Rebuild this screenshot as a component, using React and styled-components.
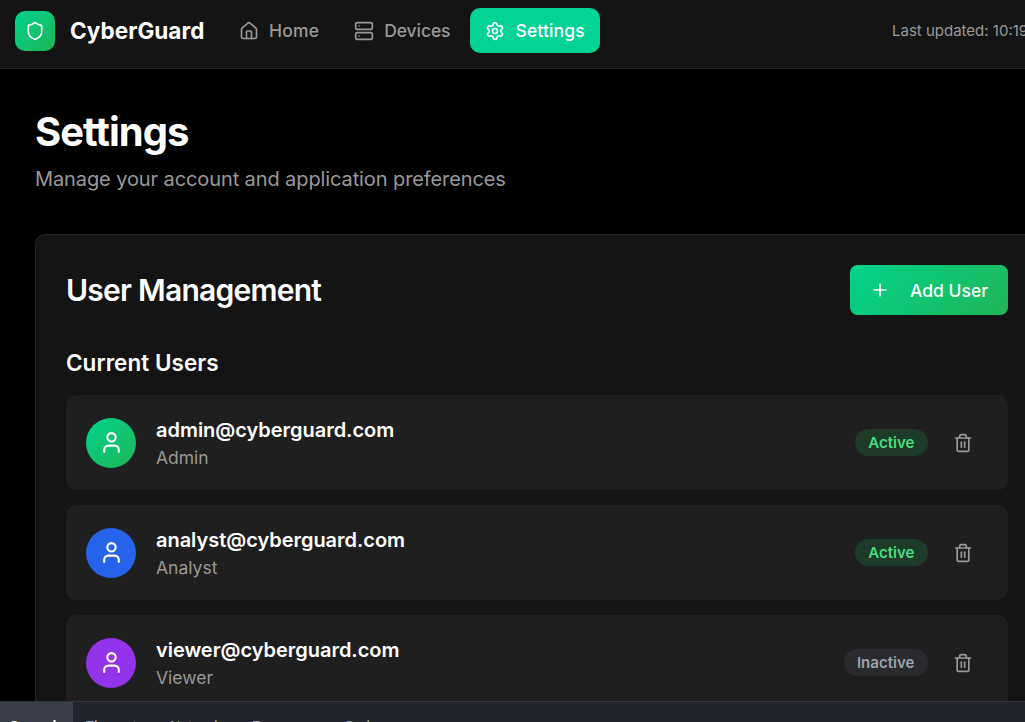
import React from 'react';
import styled, { createGlobalStyle } from 'styled-components';
import { Shield, House, Server, Settings, Plus, User, Trash2 } from 'lucide-react';

const Global = createGlobalStyle`
  *, *::before, *::after { box-sizing: border-box; }
  html, body { margin: 0; background: #000; }
  body { height: 722px; overflow: hidden; font-family: Inter, "Liberation Sans", sans-serif; color: #fff; }
  button { font-family: inherit; border: 0; background: none; margin: 0; padding: 0; }
  h1, h2, h3, p { margin: 0; }
`;

const Window = styled.div`
  width: 1025px;
  height: 722px;
  overflow: hidden;
  display: flex;
  flex-direction: column;
`;

const Page = styled.div`
  flex: 1;
  min-height: 0;
  overflow: hidden;
`;

const Header = styled.header`
  display: flex;
  align-items: center;
  height: 69px;
  padding: 0 0 7px 15px;
  background: #141414;
  border-bottom: 1px solid #262626;
`;

const LogoMark = styled.div`
  display: flex;
  align-items: center;
  justify-content: center;
  width: 40px;
  height: 40px;
  margin-right: 15px;
  border-radius: 10px;
  background: linear-gradient(135deg, #00d38b, #20b557);
`;

const LogoName = styled.span`
  width: 134px;
  font-size: 22.5px;
  line-height: 35px;
  font-weight: 700;
  letter-spacing: 0.05px;
  white-space: nowrap;
`;

const Nav = styled.nav`
  display: flex;
  gap: 5px;
  margin-left: 20px;
`;

const NavLink = styled.button`
  display: flex;
  align-items: center;
  gap: 10px;
  height: 45px;
  padding: 0 15px;
  border-radius: 10px;
  font-size: 17.5px;
  font-weight: 500;
  letter-spacing: ${(p) => p.$tracking || 0}px;
  white-space: nowrap;
  color: ${(p) => (p.$active ? '#fff' : '#999')};
  background: ${(p) => (p.$active ? '#00d395' : 'transparent')};
`;

const Updated = styled.span`
  width: 133px;
  margin-left: auto;
  overflow: hidden;
  white-space: nowrap;
  font-size: 15px;
  line-height: 20px;
  color: #999;
`;

const Main = styled.main`
  padding: 40px 0 0 35px;
`;

const Title = styled.h1`
  font-size: 40px;
  line-height: 45px;
  font-weight: 700;
  letter-spacing: -0.025em;
`;

const Subtitle = styled.p`
  margin-top: 10px;
  font-size: 20px;
  line-height: 30px;
  letter-spacing: -0.1px;
  color: #999;
`;

const Panel = styled.section`
  width: 1004px;
  height: 600px;
  margin-top: 40px;
  padding: 30px;
  border: 1px solid #262626;
  border-radius: 10px;
  background: #141414;
`;

const PanelHead = styled.div`
  display: flex;
  align-items: center;
  justify-content: space-between;
  height: 50px;
`;

const PanelTitle = styled.h2`
  font-size: 30px;
  line-height: 40px;
  font-weight: 600;
  letter-spacing: -0.025em;
`;

const AddButton = styled.button`
  display: flex;
  align-items: center;
  gap: 20px;
  width: 158px;
  height: 50px;
  padding: 0 20px;
  border-radius: 7.5px;
  color: #fff;
  font-size: 17.5px;
  font-weight: 500;
  white-space: nowrap;
  background: linear-gradient(135deg, #00d38b, #20b557);
`;

const SectionTitle = styled.h3`
  margin: 30px 0 15px;
  font-size: 22.5px;
  line-height: 35px;
  font-weight: 600;
  letter-spacing: 0.04px;
`;

const UserList = styled.div`
  display: flex;
  flex-direction: column;
  gap: 15px;
`;

const UserRow = styled.div`
  display: flex;
  align-items: center;
  height: 95px;
  padding: 0 20px;
  border-radius: 10px;
  background: #1f1f1f;
`;

const Avatar = styled.div`
  display: flex;
  align-items: center;
  justify-content: center;
  width: 50px;
  height: 50px;
  border-radius: 50%;
  background: ${(p) => p.$fill};
`;

const Identity = styled.div`
  flex: 1;
  margin-left: 20px;
`;

const Email = styled.p`
  font-size: 20px;
  line-height: 30px;
  font-weight: 600;
  letter-spacing: -0.03px;
`;

const Role = styled.p`
  font-size: 17.5px;
  line-height: 25px;
  color: #999;
`;

const Badge = styled.span`
  display: flex;
  align-items: center;
  height: 27px;
  padding: 0 13.5px 0 13px;
  border-radius: 14px;
  font-size: 15px;
  font-weight: 600;
  letter-spacing: 0.04px;
  color: ${(p) => (p.$active ? '#4ade80' : '#9ca3af')};
  background: ${(p) => (p.$active ? '#1e3a29' : '#2a2b2f')};
`;

const DeleteButton = styled.button`
  display: flex;
  align-items: center;
  justify-content: center;
  width: 40px;
  height: 40px;
  margin: 0 5px 0 15px;
  color: #999;
`;

const DevTools = styled.div`
  display: flex;
  height: 21px;
  overflow: hidden;
  border-top: 1px solid #31353f;
  background: #22252e;
`;

const DevTab = styled.div`
  flex: none;
  width: ${(p) => p.$width}px;
  height: 50px;
  padding-left: ${(p) => (p.$active ? 9 : 12)}px;
  line-height: 49px;
  font-family: "Liberation Sans", Arial, sans-serif;
  font-size: 14px;
  font-weight: ${(p) => (p.$active ? 700 : 400)};
  color: ${(p) => (p.$active ? '#fff' : '#a5abb6')};
  background: ${(p) => (p.$active ? '#393e49' : 'transparent')};
`;

const brandFill = 'linear-gradient(135deg, #00d38b, #20b557)';

const users = [
  { email: 'admin@cyberguard.com', role: 'Admin', fill: brandFill, active: true },
  { email: 'analyst@cyberguard.com', role: 'Analyst', fill: '#2563eb', active: true },
  { email: 'viewer@cyberguard.com', role: 'Viewer', fill: '#9333ea', active: false },
];

const devTabs = [
  ['Console', 73],
  ['Elements', 85],
  ['Network', 82],
  ['Resources', 92],
  ['Code', 60],
];

export default function App() {
  return (
    <Window>
      <Global />
      <Page>
        <Header>
          <LogoMark><Shield size={20} /></LogoMark>
          <LogoName>CyberGuard</LogoName>
          <Nav>
            <NavLink $tracking={0.18}><House size={20} />Home</NavLink>
            <NavLink $tracking={-0.08}><Server size={20} />Devices</NavLink>
            <NavLink $active $tracking={0.15}><Settings size={20} />Settings</NavLink>
          </Nav>
          <Updated>Last updated: 10:19</Updated>
        </Header>
        <Main>
          <Title>Settings</Title>
          <Subtitle>Manage your account and application preferences</Subtitle>
          <Panel>
            <PanelHead>
              <PanelTitle>User Management</PanelTitle>
              <AddButton><Plus size={20} />Add User</AddButton>
            </PanelHead>
            <SectionTitle>Current Users</SectionTitle>
            <UserList>
              {users.map((u) => (
                <UserRow key={u.email}>
                  <Avatar $fill={u.fill}><User size={25} /></Avatar>
                  <Identity>
                    <Email>{u.email}</Email>
                    <Role>{u.role}</Role>
                  </Identity>
                  <Badge $active={u.active}>{u.active ? 'Active' : 'Inactive'}</Badge>
                  <DeleteButton><Trash2 size={20} /></DeleteButton>
                </UserRow>
              ))}
            </UserList>
          </Panel>
        </Main>
      </Page>
      <DevTools>
        {devTabs.map(([name, width], i) => (
          <DevTab key={name} $width={width} $active={i === 0}>{name}</DevTab>
        ))}
      </DevTools>
    </Window>
  );
}
